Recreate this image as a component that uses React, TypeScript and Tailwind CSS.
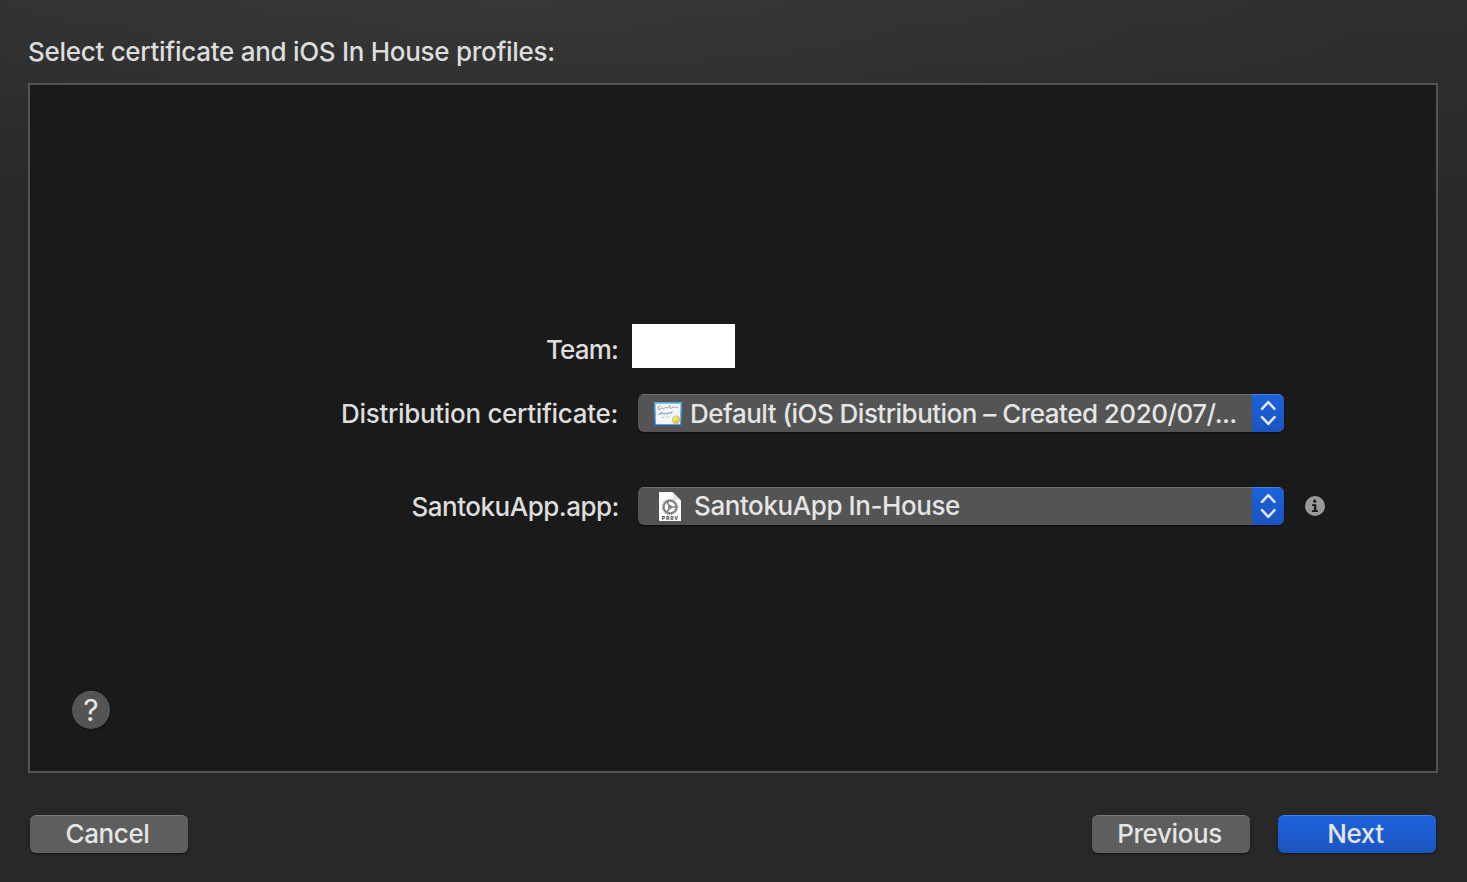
import type { ReactNode } from "react";

function CertificateIcon() {
  return (
    <svg width="28" height="24" viewBox="0 0 28 24" className="shrink-0">
      <defs>
        <linearGradient id="certBorder" x1="0" y1="0" x2="0" y2="1">
          <stop offset="0" stopColor="#4fa9e0" />
          <stop offset="1" stopColor="#225fa6" />
        </linearGradient>
        <radialGradient id="certSeal" cx="0.4" cy="0.35" r="0.7">
          <stop offset="0" stopColor="#f2ec8a" />
          <stop offset="1" stopColor="#c9bd3c" />
        </radialGradient>
      </defs>
      <rect width="28" height="24" fill="url(#certBorder)" />
      <rect x="1.6" y="1.6" width="24.8" height="20.8" fill="#f3f5f7" />
      <path d="M6.500 4C4 4 3 7.300 5 7.500C6.500 7.500 7 6 8 6S9 7.500 10.500 6.200S12 5.500 12.500 5.500S13 7.200 14 5.500S16 3.500 16 4.500S15.500 7.300 17.500 6S20 5 20.500 5S21.500 6.500 24 5" fill="none" stroke="#7f8489" strokeWidth="0.800" />
      <path d="M4.500 12.500c2 .3 2-2.200 3-1.800s0 1.500 2 1 2-.7 3 0 2-1 3-.8 1 .5 3-1.300" fill="none" stroke="#7baed2" strokeWidth="1.300" />
      <path d="M7 15.500h3M11.500 15h4" stroke="#bccfdd" strokeWidth="1" />
      <path d="M19.500 20l-.5 2h6l-.5-2" fill="#ddd88c" />
      <circle cx="22" cy="17.500" r="4" fill="url(#certSeal)" />
    </svg>
  );
}

function ProvisionIcon() {
  return (
    <svg width="24" height="31" viewBox="0 0 24 31" className="shrink-0">
      <path d="M1 1h13.500L23 9.500V30H1z" fill="#fdfdfd" />
      <path d="M14.500 1L23 9.500C20 8.500 17 8.500 15 9C15.500 6 15.500 3.500 14.500 1z" fill="#e2e2e2" />
      <circle cx="12" cy="16" r="7.600" fill="none" stroke="#858882" strokeWidth="1.200" strokeDasharray="1 0.990" />
      <circle cx="12" cy="16" r="6.300" fill="none" stroke="#7e817c" strokeWidth="1.900" />
      <path d="M12 16H18M12 16L9 10.800M12 16L9 21.200" stroke="#7e817c" strokeWidth="1.700" />
      <circle cx="12" cy="16" r="2" fill="#7e817c" />
      <text x="3.800" y="28.700" fontSize="5.500" fontWeight="700" letterSpacing="0.900" fontFamily="Liberation Mono, monospace" fill="#333">PROV</text>
    </svg>
  );
}

function InfoIcon() {
  return (
    <svg width="20" height="20" viewBox="0 0 20 20" className="shrink-0">
      <circle cx="10" cy="10" r="10" fill="#999" />
      <circle cx="9.700" cy="5.200" r="1.600" fill="#1a1a1a" />
      <path d="M7 8.300h4.300v6h1.700V16H6.900v-1.700h2V10H7z" fill="#1a1a1a" />
    </svg>
  );
}

function PopUpButton({ children }: { children: ReactNode }) {
  return (
    <button className="flex h-[38px] w-[646px] overflow-hidden rounded-[6px] bg-[#545454] text-left shadow-[0_1px_2px_#0008]">
      <span className="flex h-full min-w-0 flex-1 items-center border-t border-[#707070]">{children}</span>
      <span className="flex h-full w-8 items-center justify-center border-t border-[#477fe2] bg-linear-to-b from-[#1d62dc] to-[#1b54bf] pb-px">
        <svg width="18" height="26" viewBox="0 0 18 26" fill="none" stroke="#e2eafa" strokeWidth="2.500" strokeLinecap="round" strokeLinejoin="round">
          <path d="M3 8.800L9.300 2.200l6.200 6.600M3 17.200L9.300 23.800l6.200-6.600" />
        </svg>
      </span>
    </button>
  );
}

export default function App() {
  return (
    <main className="flex h-[882px] w-[1467px] flex-col bg-[#282828] bg-[radial-gradient(ellipse_900px_180px_at_35%_0%,#ffffff0a,#ffffff00),linear-gradient(#2f2f2f,#2d2d2d_80px,#282828_240px)] pl-7 pr-[29px] font-['Inter',sans-serif] text-[26px] font-[450] leading-8 text-[#dddddd]">
      <h1 className="h-[83px] whitespace-nowrap pt-9 tracking-[-0.29px]">Select certificate and iOS In House profiles:</h1>
      <section className="flex h-[690px] flex-col border-2 border-[#535353] bg-[#1a1a1a] pt-[239px]">
        <div className="flex h-11 gap-[13px]">
          <span className="w-[589px] pr-px pt-[10px] text-right tracking-[-0.85px]">Team:</span>
          <span className="w-[103px] bg-white" />
        </div>
        <div className="mt-[26px] flex h-[38px] items-center gap-[19px]">
          <span className="w-[589px] pr-px pt-[2px] text-right tracking-[-0.32px]">Distribution certificate:</span>
          <PopUpButton>
            <span className="ml-4 flex"><CertificateIcon /></span>
            <span className="ml-2 whitespace-nowrap pt-px tracking-[-0.52px] text-[#e5e5e5]">Default (iOS Distribution – Created 2020/07/...</span>
          </PopUpButton>
        </div>
        <div className="mt-[55px] flex h-[38px] items-center gap-[19px]">
          <span className="w-[589px] pt-[2px] text-right tracking-[-0.5px]">SantokuApp.app:</span>
          <PopUpButton>
            <span className="ml-5 flex"><ProvisionIcon /></span>
            <span className="ml-3 whitespace-nowrap pb-px tracking-[-0.42px] text-[#e5e5e5]">SantokuApp In-House</span>
          </PopUpButton>
          <span className="ml-[2px]"><InfoIcon /></span>
        </div>
        <button className="ml-[42px] mt-[166px] flex size-[38px] items-center justify-center rounded-full border-t border-[#656565] bg-[#545454] pb-px text-[30px] font-normal text-[#e8e8e8] shadow-[0_1px_2px_#0008]">?</button>
      </section>
      <footer className="mt-[42px] flex h-[38px] pl-[2px] pr-[2px] text-[#e5e5e5]">
        <button className="w-[158px] rounded-[6px] border-t border-[#7a7a7a] bg-[#5e5e5e] pb-[2px] pr-[3px] tracking-[-0.4px] shadow-[0_1px_2px_#0008]">Cancel</button>
        <button className="ml-auto w-[158px] rounded-[6px] border-t border-[#7a7a7a] bg-[#5e5e5e] pb-[2px] pr-[3px] tracking-[-0.4px] shadow-[0_1px_2px_#0008]">Previous</button>
        <button className="ml-7 w-[158px] rounded-[6px] border-t border-[#477fe2] bg-linear-to-b from-[#1d62dc] to-[#1b54bf] pb-[2px] pr-[3px] tracking-[-0.4px] shadow-[0_1px_2px_#0008]">Next</button>
      </footer>
    </main>
  );
}
